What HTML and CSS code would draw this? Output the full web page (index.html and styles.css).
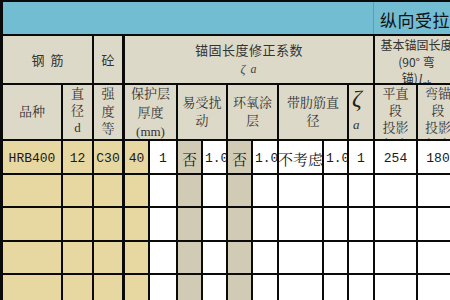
FILE: index.html
```html
<!DOCTYPE html>
<html lang="zh">
<head>
<meta charset="utf-8">
<title>纵向受拉钢筋锚固长度</title>
<link rel="stylesheet" href="styles.css">
</head>
<body>
<div class="sheet">
  <div class="cell band">
    <div class="band-left"></div>
    <div class="band-title">纵向受拉钢筋锚固长度计算表</div>
  </div>

  <div class="cell hb s2">钢&nbsp;&nbsp;筋</div>
  <div class="cell hb">砼</div>
  <div class="cell hb s9 thick coef"><span class="t">锚固长度修正系数<br><span class="zeta-sm">ζ a</span></span></div>
  <div class="cell hb s2 lab"><span class="t">基本锚固长度<br>(90°&nbsp;弯<br>锚)<i class="l">l</i><sub>ab</sub></span></div>
  <div class="cell hb s2"></div>

  <div class="cell hc">品种</div>
  <div class="cell hc top">直<br>径<br>d</div>
  <div class="cell hc top top2">强<br>度<br>等<br>级</div>
  <div class="cell hc s2 thick lh19">保护层<br>厚度<br>(mm)</div>
  <div class="cell hc s2">易受扰<br>动</div>
  <div class="cell hc s2">环氧涂<br>层</div>
  <div class="cell hc s2">带肋筋直<br>径</div>
  <div class="cell hc zeta"><span class="zeta-big">ζ</span><span class="zeta-a">a</span></div>
  <div class="cell hc top">平直<br>段<br>投影<br>长度</div>
  <div class="cell hc top">弯锚<br>段<br>投影<br>长度</div>
  <div class="cell hc"></div>
  <div class="cell hc"></div>

  <div class="cell d y">HRB400</div>
  <div class="cell d y">12</div>
  <div class="cell d y">C30</div>
  <div class="cell d y thick">40</div>
  <div class="cell d w">1</div>
  <div class="cell d g"><span class="zh">否</span></div>
  <div class="cell d w left">1.0</div>
  <div class="cell d g"><span class="zh">否</span></div>
  <div class="cell d w left">1.0</div>
  <div class="cell d w"><span class="zh">不考虑</span></div>
  <div class="cell d w left">1.0</div>
  <div class="cell d w">1</div>
  <div class="cell d w">254</div>
  <div class="cell d w">180</div>
  <div class="cell d w"></div>
  <div class="cell d w"></div>

  <div class="cell y"></div><div class="cell y"></div><div class="cell y"></div><div class="cell y thick"></div>
  <div class="cell w"></div><div class="cell g"></div><div class="cell w"></div><div class="cell g"></div>
  <div class="cell w"></div><div class="cell w"></div><div class="cell w"></div><div class="cell w"></div>
  <div class="cell w"></div><div class="cell w"></div><div class="cell w"></div><div class="cell w"></div>

  <div class="cell y"></div><div class="cell y"></div><div class="cell y"></div><div class="cell y thick"></div>
  <div class="cell w"></div><div class="cell g"></div><div class="cell w"></div><div class="cell g"></div>
  <div class="cell w"></div><div class="cell w"></div><div class="cell w"></div><div class="cell w"></div>
  <div class="cell w"></div><div class="cell w"></div><div class="cell w"></div><div class="cell w"></div>

  <div class="cell y"></div><div class="cell y"></div><div class="cell y"></div><div class="cell y thick"></div>
  <div class="cell w"></div><div class="cell g"></div><div class="cell w"></div><div class="cell g"></div>
  <div class="cell w"></div><div class="cell w"></div><div class="cell w"></div><div class="cell w"></div>
  <div class="cell w"></div><div class="cell w"></div><div class="cell w"></div><div class="cell w"></div>

  <div class="cell y"></div><div class="cell y"></div><div class="cell y"></div><div class="cell y thick"></div>
  <div class="cell w"></div><div class="cell g"></div><div class="cell w"></div><div class="cell g"></div>
  <div class="cell w"></div><div class="cell w"></div><div class="cell w"></div><div class="cell w"></div>
  <div class="cell w"></div><div class="cell w"></div><div class="cell w"></div><div class="cell w"></div>
</div>
</body>
</html>
```

FILE: styles.css
```css
html, body {
  margin: 0;
  padding: 0;
  background: #ffffff;
  overflow: hidden;
}

.sheet {
  display: grid;
  grid-template-columns: 58px 29px 28px 24px 26px 23px 23px 23px 24px 43px 23px 24px 41px 40px 60px 60px;
  grid-template-rows: 32px 47px 54px 32px 31px 32px 31px 32px;
  gap: 2px;
  padding: 2px 0 0 3px;
  background: #0a0a0a;
  width: max-content;
  font-family: "Noto Sans CJK SC", "Noto Sans", sans-serif;
  color: #222;
}

.cell {
  display: flex;
  align-items: center;
  justify-content: center;
  text-align: center;
  overflow: hidden;
  white-space: nowrap;
  box-sizing: border-box;
}

.t { display: block; }

.s2 { grid-column: span 2; }
.s9 { grid-column: span 9; }
.thick { border-left: 1px solid #0a0a0a; }

/* title band */
.band {
  grid-column: 1 / -1;
  background: #73bdd3;
  justify-content: flex-start;
  align-items: stretch;
}
.band-left {
  width: 370px;
  flex: none;
  border-right: 1px solid #5f9fb3;
}
.band-title {
  display: flex;
  align-items: center;
  padding: 3px 0 0 6px;
  font-size: 17px;
  letter-spacing: 0.5px;
  color: #111;
}

/* header rows */
.hb {
  background: #dcd9c8;
  color: #333;
  font-size: 13px;
  line-height: 18px;
}
.coef .t { letter-spacing: 0.5px; }
.zeta-sm {
  font-family: "Liberation Serif", serif;
  font-style: italic;
  font-size: 12px;
  color: #444;
  letter-spacing: 1px;
}
.lab {
  font-size: 12px;
  line-height: 16.5px;
  align-items: flex-start;
}
.lab .t { padding-top: 1px; }
.lab .l {
  font-family: "Liberation Serif", serif;
  font-size: 13px;
  padding-left: 1px;
}
.lab sub {
  font-size: 9px;
  line-height: 0;
  font-style: italic;
  font-family: "Liberation Serif", serif;
}

.hc {
  background: #dcd9c8;
  color: #333;
  font-family: "Liberation Serif", "Noto Serif CJK SC", "Noto Sans CJK SC", serif;
  font-size: 13px;
  line-height: 18px;
}
.hc.top {
  display: block;
  line-height: 17px;
  padding-top: 0;
}
.hc.top2 { line-height: 17.5px; }
.lh19 { line-height: 19px; }

.zeta {
  flex-direction: column;
  align-items: flex-start;
  justify-content: flex-start;
  padding-left: 3px;
}
.zeta-big {
  font-family: "Liberation Serif", serif;
  font-style: italic;
  font-size: 24px;
  line-height: 26px;
  color: #222;
}
.zeta-a {
  font-family: "Liberation Serif", serif;
  font-style: italic;
  font-size: 13px;
  line-height: 14px;
  margin-top: 7px;
  padding-left: 1px;
}

/* data */
.d {
  font-family: "Liberation Mono", "Noto Sans CJK SC", monospace;
  font-size: 13px;
  color: #1a1a1a;
  padding-top: 2px;
}
.d.left {
  justify-content: flex-start;
  padding-left: 2px;
}
.zh {
  font-family: "Noto Serif CJK SC", "Noto Sans CJK SC", serif;
  font-size: 15px;
}

.y { background: #e7d7a0; }
.g { background: #d1cbb5; }
.w { background: #ffffff; }
```
